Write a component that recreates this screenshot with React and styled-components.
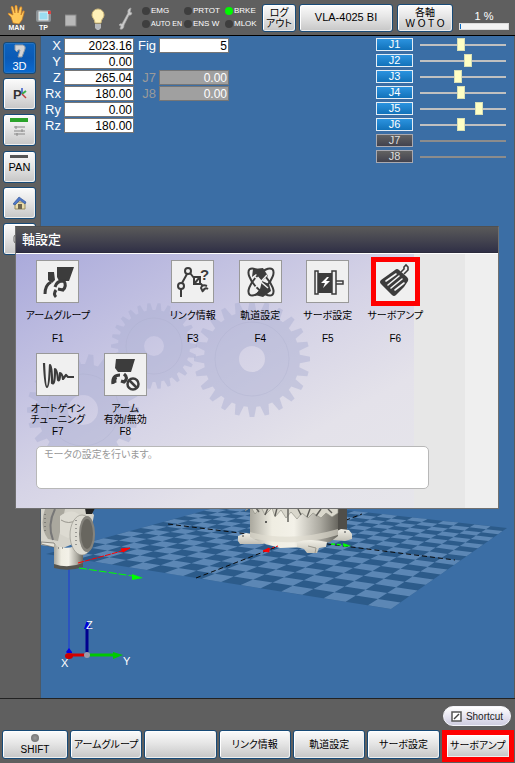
import React from "react";
import styled, { createGlobalStyle, css } from "styled-components";

const GlobalStyle = createGlobalStyle`
  *, *::before, *::after { box-sizing: border-box; }
  body {
    margin: 0;
    font-family: "Liberation Sans", "Noto Sans CJK JP", sans-serif;
    font-size: 11px;
    font-feature-settings: "palt";
    color: #111;
  }
  button, input, textarea {
    font: inherit;
    font-feature-settings: inherit;
    margin: 0;
    padding: 0;
  }
`;

const Page = styled.div`
  position: relative;
  display: flex;
  flex-direction: column;
  min-height: 100vh;
  background: #5f5f5f;
`;

/* ---------- top bar ---------- */

const TopBar = styled.header`
  display: flex;
  align-items: center;
  height: 36px;
  padding: 0 6px 0 3px;
  border-bottom: 1px solid #000;
  background: #5f5f5f;
`;

const StatusIcon = styled.div`
  display: flex;
  flex-direction: column;
  align-items: center;
  width: 27px;
  height: 28px;
  color: #fff;
  font-size: 7px;
  font-weight: bold;
  line-height: 7px;
  svg { display: block; flex: none; }
`;

const LampGrid = styled.ul`
  display: grid;
  grid-template-columns: 42px 41px 33px;
  grid-auto-rows: 13px;
  margin: 0 0 0 4px;
  padding: 0;
  list-style: none;
`;

const Lamp = styled.li`
  display: flex;
  align-items: center;
  gap: 1px;
  color: #fff;
  font-size: ${(p) => (p.$long ? "7px" : "8px")};
  line-height: 10px;
  white-space: nowrap;
  &::before {
    content: "";
    flex: none;
    width: 8px;
    height: 8px;
    border-radius: 50%;
    background: ${(p) => (p.$on ? "#00f800" : "#3e3e3e")};
  }
`;

const raised = css`
  border: 1px solid #174a77;
  border-radius: 3px;
  background: linear-gradient(#fbfbfb, #e6e6e6 45%, #c6c6c6);
  box-shadow: inset 1px 1px 0 #fff, inset -1px -1px 0 #eee;
  color: #000;
`;

const BarButton = styled.button`
  ${raised}
  flex: ${(p) => (p.$grow ? "1 1 0" : "none")};
  width: ${(p) => p.$width || "auto"};
  height: 28px;
  margin-left: ${(p) => p.$gap || "0"};
  font-size: ${(p) => (p.$grow ? "11px" : "10px")};
  line-height: 11px;
`;

const Speed = styled.label`
  display: flex;
  flex-direction: column;
  align-items: center;
  width: 50px;
  margin-left: 6px;
  padding-top: 4px;
  color: #fff;
  font-size: 11px;
  line-height: 14px;
`;

const SpeedBar = styled.progress`
  appearance: none;
  display: block;
  width: 100%;
  height: 7px;
  border: 1px solid #ddd;
  &::-webkit-progress-bar { background: #f4f4f4; }
  &::-webkit-progress-value { background: #0a6cc4; }
`;

/* ---------- work area ---------- */

const Work = styled.main`
  display: flex;
  flex: 1;
  border-right: 1px solid #5a5a5a;
`;

const Rail = styled.nav`
  display: flex;
  flex-direction: column;
  gap: 5px;
  width: 41px;
  padding: 6px 4px 0 3px;
  border-right: 1px solid #4c5966;
`;

const RailGroup = styled.div`
  display: flex;
  flex-direction: column;
  gap: 4px;
`;

const RailButton = styled.button`
  ${raised}
  display: flex;
  flex-direction: column;
  align-items: center;
  justify-content: ${(p) => (p.$top ? "flex-start" : "center")};
  gap: 2px;
  width: 33px;
  height: 32px;
  padding-top: ${(p) => (p.$top ? "3px" : "0")};
  font-size: 11px;
  line-height: 12px;
  svg { display: block; flex: none; }
  ${(p) => p.$active && css`
    background: linear-gradient(#0e63bd, #0a5ab6 50%, #0b6ad0);
    box-shadow: inset 0 0 0 1px #2474c4;
    color: #fff;
  `}
`;

const Viewport = styled.section`
  position: relative;
  display: flex;
  flex: 1;
  justify-content: space-between;
  align-items: flex-start;
  min-width: 0;
  overflow: hidden;
  background: #3b6ea5;
`;

const Scene = styled.svg`
  position: absolute;
  top: 0;
  left: 0;
  width: 100%;
  height: 100%;
`;

const PoseGrid = styled.div`
  position: relative;
  display: grid;
  grid-template-columns: 92px 94px;
  grid-auto-rows: 15px;
  gap: 1px 1px;
  margin: 2px 0 0 1px;
`;

const Pose = styled.label`
  grid-column: ${(p) => p.$col};
  grid-row: ${(p) => p.$row};
  display: flex;
  align-items: center;
  justify-content: flex-end;
  gap: 3px;
  color: ${(p) => (p.$off ? "#9a9a9a" : "#fff")};
  font-size: 13px;
  line-height: 15px;
`;

const PoseInput = styled.input`
  width: 70px;
  height: 15px;
  padding-right: 1px;
  border: 1px solid #767676;
  border-radius: 0;
  background: #fff;
  color: #000;
  font-size: 12px;
  line-height: 13px;
  text-align: right;
  &:disabled { background: #a0a0a0; color: #fff; }
`;

const JointList = styled.div`
  position: relative;
  display: flex;
  flex-direction: column;
  gap: 3px;
  margin: 2px 8px 0 0;
`;

const JointRow = styled.div`
  display: flex;
  align-items: center;
  gap: 7px;
  height: 13px;
`;

const JointButton = styled.button`
  width: 37px;
  height: 13px;
  border: 1px solid #e4eef6;
  background: linear-gradient(#2b93df, #1272ba);
  color: #fff;
  font-size: 11px;
  line-height: 11px;
  &:disabled {
    border-color: #a9a9b0;
    background: linear-gradient(#626262, #42424e);
    color: #ddd;
  }
`;

const JointSlider = styled.input`
  appearance: none;
  width: 86px;
  height: 13px;
  background: linear-gradient(#c0c0c0, #c0c0c0) center / 100% 2px no-repeat;
  &::-webkit-slider-thumb {
    appearance: none;
    width: 8px;
    height: 13px;
    border: 1px solid #d8dfb8;
    background: #ffffc4;
  }
  &:disabled {
    background: linear-gradient(#8c8c8c, #8c8c8c) center / 100% 2px no-repeat;
  }
  &:disabled::-webkit-slider-thumb { visibility: hidden; }
`;

/* ---------- dialog ---------- */

const Dialog = styled.section`
  position: absolute;
  top: 226px;
  left: 15px;
  right: 16px;
  border: 1px solid #707070;
  border-top-color: #505050;
  background: #efefef;
`;

const DialogTitle = styled.h1`
  margin: 0;
  padding: 0 6px;
  height: 26px;
  border-bottom: 1px solid #2b2b3c;
  background: linear-gradient(#595959, #454550 50%, #303046);
  color: #fff;
  font-size: 13px;
  font-weight: 500;
  line-height: 26px;
`;

const DialogBody = styled.div`
  position: relative;
  padding: 6px 69px 19px 8px;
  border-top: 1px solid #fff;
  background:
    linear-gradient(90deg, transparent 398px, #e7e7e7 398px, #e7e7e7 449px, #efefef 449px),
    linear-gradient(150deg, #aaaadb, #d5d3e6 44%, #e4e2ea 66%, #e7e7eb);
`;

const Gears = styled.svg`
  position: absolute;
  top: 0;
  left: 0;
  width: 398px;
  height: 253px;
`;

const Menu = styled.div`
  position: relative;
  display: grid;
  grid-template-columns: repeat(6, minmax(0, 1fr));
  grid-auto-rows: 93px;
`;

const MenuItem = styled.button`
  grid-column: ${(p) => p.$col};
  display: flex;
  flex-direction: column;
  align-items: center;
  border: 0;
  background: none;
  color: #000;
  font-size: 10px;
  line-height: 11px;
`;

const MenuIcon = styled.span`
  width: 43px;
  height: 43px;
  border: 1px solid #999;
  background: #f0f0f0;
  outline: ${(p) => (p.$marked ? "5px solid #f00" : "none")};
  outline-offset: -2px;
  svg { display: block; }
`;

const MenuLabel = styled.span`
  height: 30px;
  padding-top: 7px;
  white-space: pre;
`;

const Hint = styled.textarea`
  position: relative;
  display: block;
  width: calc(100% - 12px);
  height: 43px;
  margin-left: 12px;
  padding: 2px 7px;
  border: 1px solid #b8b8b8;
  border-radius: 5px;
  background: #fff;
  color: #999;
  font-size: 10px;
  line-height: 12px;
  resize: none;
`;

/* ---------- footer ---------- */

const Footer = styled.footer`
  display: flex;
  flex-direction: column;
  align-items: flex-end;
  gap: 4px;
  height: 65px;
  padding-top: 7px;
  border-top: 1px solid #222;
`;

const Shortcut = styled.button`
  display: flex;
  align-items: center;
  justify-content: center;
  gap: 4px;
  width: 68px;
  height: 20px;
  margin-right: 4px;
  border: 1px solid #f4f4fa;
  border-radius: 10px;
  background: linear-gradient(#fff, #e2e0ee 60%, #cfcde0);
  color: #222;
  font-size: 10px;
`;

const KeyRow = styled.div`
  display: grid;
  grid-template-columns: 66px repeat(6, minmax(0, 1fr));
  gap: 2px;
  align-items: start;
  align-self: stretch;
  padding: 0 1px 0 2px;
`;

const KeyButton = styled.button`
  ${raised}
  display: flex;
  flex-direction: column;
  align-items: center;
  justify-content: center;
  gap: 2px;
  height: 29px;
  font-size: 10px;
  line-height: 12px;
  white-space: nowrap;
  ${(p) => p.$marked && css`
    height: 32px;
    border: 5px solid #f00;
    border-radius: 0;
  `}
`;

const ShiftLamp = styled.span`
  width: 8px;
  height: 8px;
  border-radius: 50%;
  background: radial-gradient(#999, #6a6a6a);
`;

/* ---------- scene geometry ---------- */

const CORNERS = [[46, 554], [247, 499], [507, 528], [391, 609]];
const CELLS = 18;

function makeProjection([[x0, y0], [x1, y1], [x2, y2], [x3, y3]]) {
  const dx1 = x1 - x2, dx2 = x3 - x2, sx = x0 - x1 + x2 - x3;
  const dy1 = y1 - y2, dy2 = y3 - y2, sy = y0 - y1 + y2 - y3;
  const det = dx1 * dy2 - dx2 * dy1;
  const g = (sx * dy2 - dx2 * sy) / det;
  const h = (dx1 * sy - sx * dy1) / det;
  return (u, v) => {
    const w = g * u + h * v + 1;
    return [
      ((x1 - x0 + g * x1) * u + (x3 - x0 + h * x3) * v + x0) / w,
      ((y1 - y0 + g * y1) * u + (y3 - y0 + h * y3) * v + y0) / w,
    ];
  };
}

const project = makeProjection(CORNERS);

function checkerPath() {
  let d = "";
  for (let i = 0; i < CELLS; i += 1) {
    for (let j = 0; j < CELLS; j += 1) {
      if ((i + j) % 2 === 1) {
        const pts = [[i, j], [i + 1, j], [i + 1, j + 1], [i, j + 1]].map(([a, b]) =>
          project(a / CELLS, b / CELLS).map((n) => n.toFixed(1)).join(" ")
        );
        d += `M${pts.join("L")}Z`;
      }
    }
  }
  return d;
}

const lightCells = checkerPath();

function RobotScene() {
  return (
    <Scene viewBox="41 36 473 662" preserveAspectRatio="xMinYMin slice" aria-hidden="true">
      <defs>
        <linearGradient id="shell">
          <stop offset="0" stopColor="#aaa89e" />
          <stop offset="0.25" stopColor="#efede2" />
          <stop offset="0.5" stopColor="#f3f1e8" />
          <stop offset="0.8" stopColor="#aaa89f" />
          <stop offset="1" stopColor="#68665f" />
        </linearGradient>
        <linearGradient id="foot" x2="0" y2="1">
          <stop offset="0" stopColor="#f2f0e7" />
          <stop offset="1" stopColor="#c0beb4" />
        </linearGradient>
      </defs>
      <polygon points={CORNERS.join(" ")} fill="#2c5b8a" />
      <path d={lightCells} fill="#5c87b5" />
      <g stroke="#0a0a0a" strokeWidth="1" strokeDasharray="5 3">
        <path d="M168 524L455 560M196 578L362 514" />
      </g>

      <g>
        <path d="M336 505h11v25l-9 5z" fill="#504e49" />
        <path d="M238 536l8-3 11 2 7 9h-24l-2-3z" fill="url(#foot)" />
        <path d="M333 533l8-4 8 1 3 4v5l-7 2-12-1z" fill="url(#foot)" />
        <path d="M250 505h88v31l-8 6-18 5-32 1-18-5-12-6z" fill="url(#shell)" />
        <path d="M250 532q40 11 88-3v6q-42 13-88 3z" fill="#dedccf" opacity=".65" />
        <path d="M250 505h88v8l-6 4-6-4-5 5-8-5-5 5-6-5-5 6-6-7-5 6-5-8-6 7-3-9-7 7-4-8-6 7-4-7-6 4z" fill="#d9d7cc" stroke="#8a8980" strokeWidth=".6" />
        <path d="M256 508l3 4m9-4l-3 7m12-7l-2 8m13-8v14m10-13l3 6m9-6l-3 8m14-8l-5 7m12-7l4 4" stroke="#5d5c57" strokeWidth="1.4" />
        <path d="M297 542q12-4 30 0l-1 5-7 1-2 5h-10l-3-4-7-2z" fill="url(#foot)" />
        <path d="M308 546l8 2-1 5" fill="none" stroke="#99978d" />
        <circle cx="266" cy="522" r="1" fill="#333" />
        <circle cx="243" cy="536" r="1" fill="#777" />
        <circle cx="345" cy="532" r="1" fill="#777" />
      </g>
      <path d="M278 546l-9 3" stroke="#f00" strokeDasharray="2 2" />
      <path d="M263 551l6-3v4z" fill="#f00" stroke="#f00" />
      <path d="M331 544l14 1" stroke="#0f0" strokeWidth="1.4" strokeDasharray="4 2" />
      <path d="M343 543l8 3-7 1z" fill="#0f0" />

      <path d="M69 569v82" stroke="#1d38d8" />
      <g>
        <path d="M41 509h48l5 6-4 22-27 11-22-3z" fill="#d5d3ca" />
        <path d="M45 509q-6 18 3 30l10 2 7-32z" fill="#aaa89e" />
        <path d="M55 509q-8 16-2 31" fill="none" stroke="#777" strokeWidth="2" />
        <path d="M60 516q8-6 15-4l8 5-3 17-12 4-8-4z" fill="#dddbd2" />
        <path d="M61 520q8 5 15 0" fill="none" stroke="#99978f" />
        <path d="M85 508h10l-3 6h-6z" fill="#222" />
        <path d="M41 542l13 1 3 5-16-4z" fill="#e5e3da" stroke="#55534d" strokeWidth=".6" />
        <path d="M54 544q12 8 29-1v23q-14 6-29 0z" fill="url(#shell)" />
        <path d="M54 564q14 5 29-1v4q-14 5-29 1z" fill="#565550" />
        <ellipse cx="82" cy="535" rx="12" ry="20" fill="#dddbd2" stroke="#8c8a82" strokeWidth=".6" />
        <ellipse cx="87" cy="534" rx="8" ry="18" fill="#85837c" />
        <ellipse cx="87" cy="534" rx="6" ry="15" fill="#68665f" />
        <path d="M45 514v20M76 520v26M58 548h5" stroke="#555" strokeDasharray="1 3" />
      </g>
      <path d="M78 563l44-12" stroke="#f00" strokeDasharray="6 1" />
      <path d="M121 549l9-1-7 4z" fill="#f00" stroke="#f00" />
      <path d="M79 568l54 8" stroke="#0f0" strokeDasharray="8 2" />
      <path d="M132 574l11 4-11 2z" fill="#0f0" />

      <path d="M87 655v-29" stroke="#00008f" strokeWidth="3" />
      <path d="M84 629l3-9 4 9z" fill="#0000d8" />
      <path d="M87 655h27" stroke="#00c800" strokeWidth="3" />
      <path d="M113 652l10 3-10 4z" fill="#00c800" />
      <path d="M87 655H71" stroke="#d40000" strokeWidth="3" />
      <ellipse cx="69" cy="656" rx="4" ry="3" fill="#c00" />
      <path d="M66 652l3-4 3 4v1h-5z" fill="#0000e8" />
      <circle cx="87" cy="655" r="3" fill="#9a9aac" />
      <g fill="#fff" fontSize="11">
        <text x="86" y="629">Z</text>
        <text x="61" y="667">X</text>
        <text x="123" y="665">Y</text>
      </g>
    </Scene>
  );
}

function gearPath(cx, cy, outer, inner, hole, teeth) {
  const pts = [];
  const step = (Math.PI * 2) / teeth;
  for (let k = 0; k < teeth; k += 1) {
    [[-0.34, inner], [-0.15, outer], [0.15, outer], [0.34, inner]].forEach(([o, r]) => {
      const a = (k + o) * step;
      pts.push(`${(cx + r * Math.cos(a)).toFixed(1)} ${(cy + r * Math.sin(a)).toFixed(1)}`);
    });
  }
  return `M${pts.join("L")}ZM${cx - hole} ${cy}a${hole} ${hole} 0 1 0 ${hole * 2} 0a${hole} ${hole} 0 1 0 ${-hole * 2} 0Z`;
}

function GearBackdrop() {
  return (
    <Gears viewBox="16 254 398 253" aria-hidden="true">
      <g fill="#a9aed0" fillOpacity=".45" fillRule="evenodd">
        <path d={gearPath(154, 346, 43, 36, 10, 26)} />
        <path d={gearPath(83, 410, 56, 46, 15, 22)} />
        <path d={gearPath(252, 359, 58, 48, 13, 24)} />
      </g>
      <g fill="none" stroke="#a8abcb" strokeOpacity=".3">
        <circle cx="154" cy="346" r="28" />
        <circle cx="83" cy="410" r="36" />
        <circle cx="252" cy="359" r="37" />
      </g>
    </Gears>
  );
}

/* ---------- menu drawings ---------- */

const INK = "#3c3c3c";

const drawings = {
  group: (
    <>
      <path d="M20 6h17l-5 14H22l-2-4zM11 11h6l1 8-3 3-4-3z" fill={INK} />
      <path d="M28 20q-8-1-10 6M27 20q3 5-1 9l-5-1M19 29q-3 4 0 7M14 21q-6 3-6 12" fill="none" stroke={INK} strokeWidth="3" />
    </>
  ),
  link: (
    <>
      <g fill="none" stroke={INK} strokeWidth="2">
        <circle cx="16" cy="10" r="3" /><circle cx="9" cy="25" r="3" />
        <path d="M15 13l-5 9M9 28v8M18 12l4 5M22 16h6v7h-6zM22 23l6-7M28 22l3 3M35 25q-5-2-6 2 2 4 2 4M36 28q-3-2-5 2" />
      </g>
      <text x="28" y="19" fontSize="15" fontWeight="bold" fill={INK}>?</text>
    </>
  ),
  orbit: (
    <>
      <path d="M13 8l10-1 5 8-6 5-6-7-4 3zM22 20l7 3 2 7-8 6-8-2 5-6z" fill={INK} />
      <g fill="none" stroke={INK} strokeWidth="2">
        <ellipse cx="21" cy="21" rx="17" ry="7" transform="rotate(48 21 21)" />
        <ellipse cx="21" cy="21" rx="17" ry="7" transform="rotate(-48 21 21)" />
      </g>
      <path d="M14 15l14 12M27 14L14 28" stroke="#eee" strokeWidth="1.5" />
    </>
  ),
  motor: (
    <>
      <path d="M11 12h15v20H11z" fill={INK} />
      <g fill="#f0f0f0" stroke={INK} strokeWidth="1.5">
        <path d="M8 10h3v23H8zM25 10h4v23h-4zM29 20h7v3h-7z" />
      </g>
      <path d="M20 16l-6 6h4l-2 5 7-7h-4l3-4z" fill="#fff" />
    </>
  ),
  amp: (
    <>
      <path d="M20 9q2-2 4 0l8 7q2 2 1 4l-4 6-8 8q-2 2-4 0L6 23q-2-2 0-4z" fill={INK} />
      <path d="M26 11l3-3V6l2-2 2 2v3l-4 4" fill="none" stroke={INK} strokeWidth="1.6" />
      <path d="M11 20l10-7M13 24l11-9M16 27l11-9M20 29l9-7" stroke="#f4f4f4" strokeWidth="1.6" strokeLinecap="round" />
    </>
  ),
  gain: (
    <path d="M7 9q1 24 3 24t3-22q2 0 2 18 3 3 3-14 2 0 3 11 2 2 2-7 2 0 3 6l3-4 2 2h6" fill="none" stroke={INK} strokeWidth="2.2" strokeLinejoin="round" />
  ),
  toggle: (
    <>
      <path d="M11 5h19l-4 13H13l-3-4z" fill={INK} />
      <path d="M8 30q-1-9 7-9M19 20q5 4 0 8l-3-1M11 23q-2 2-1 6" fill="none" stroke={INK} strokeWidth="3.2" />
      <circle cx="28" cy="30" r="5.5" fill="#f0f0f0" stroke={INK} strokeWidth="2.5" />
      <path d="M24 26l8 8" stroke={INK} strokeWidth="2.5" />
    </>
  ),
};

const menuItems = [
  { col: 1, icon: "group", label: "アームグループ", keyName: "F1" },
  { col: 3, icon: "link", label: "リンク情報", keyName: "F3" },
  { col: 4, icon: "orbit", label: "軌道設定", keyName: "F4" },
  { col: 5, icon: "motor", label: "サーボ設定", keyName: "F5" },
  { col: 6, icon: "amp", label: "サーボアンプ", keyName: "F6", marked: true },
  { col: 1, icon: "gain", label: "オートゲイン\nチューニング", keyName: "F7" },
  { col: 2, icon: "toggle", label: "アーム\n有効/無効", keyName: "F8" },
];

const poses = [
  ["X", "2023.16", 1, 1], ["Fig", "5", 2, 1],
  ["Y", "0.00", 1, 2],
  ["Z", "265.04", 1, 3], ["J7", "0.00", 2, 3, true],
  ["Rx", "180.00", 1, 4], ["J8", "0.00", 2, 4, true],
  ["Ry", "0.00", 1, 5],
  ["Rz", "180.00", 1, 6],
];

const joints = [
  ["J1", 48], ["J2", 57], ["J3", 44], ["J4", 48], ["J5", 70], ["J6", 48],
  ["J7", null], ["J8", null],
];

const lamps = [["EMG"], ["PRTOT"], ["BRKE", true], ["AUTO EN"], ["ENS W"], ["MLOK"]];

const keys = ["アームグループ", "", "リンク情報", "軌道設定", "サーボ設定"];

export default function App() {
  return (
    <Page>
      <GlobalStyle />
      <TopBar>
        <StatusIcon>
          <svg width="20" height="20" viewBox="0 0 20 20">
            <path d="M6 19l-2-6-3-3q0-2 3 0l2 1-2-8q1-2 2 0l2 6V2q1-2 2 0l1 7 2-6q2-1 2 1l-1 7 2-4q2-1 1 2l-2 7-3 4z" fill="#ffc858" stroke="#c87a22" strokeWidth=".7" />
          </svg>
          MAN
        </StatusIcon>
        <StatusIcon>
          <svg width="18" height="20" viewBox="0 0 18 20">
            <rect x="1" y="6" width="15" height="12" rx="2" fill="#8c9296" />
            <rect x="4" y="8" width="9" height="8" fill="#9adcf0" stroke="#eee" />
            <path d="M13 7h3v3h-3z" fill="#df4444" />
          </svg>
          TP
        </StatusIcon>
        <StatusIcon>
          <svg width="12" height="24" viewBox="0 0 12 24"><rect y="11" width="11" height="11" fill="#b8b8b8" stroke="#888" /></svg>
        </StatusIcon>
        <StatusIcon>
          <svg width="14" height="28" viewBox="0 0 14 28">
            <path d="M4 19C4 15 1 14 1 11a6 6 0 0 1 12 0c0 3-3 4-3 8z" fill="#fff1b8" stroke="#d2bc7d" />
            <path d="M4 20h6v4l-2 2H6l-2-2z" fill="#b5b8bc" />
          </svg>
        </StatusIcon>
        <StatusIcon>
          <svg width="16" height="28" viewBox="0 0 16 28">
            <path d="M5 20l6-11q-1-4 3-5l-1 4 2 1q-1 3-3 2L7 21q0 5-4 4l1-3-2-1q1-2 3-1z" fill="#ccc" stroke="#a8a8a8" strokeWidth=".7" />
          </svg>
        </StatusIcon>
        <LampGrid>
          {lamps.map(([name, on]) => (
            <Lamp key={name} $on={on} $long={name.length > 5}>{name}</Lamp>
          ))}
        </LampGrid>
        <BarButton $width="34px" $gap="4px">ログ<br />アウト</BarButton>
        <BarButton $grow $gap="3px">VLA-4025 BI</BarButton>
        <BarButton $width="56px" $gap="4px">各軸<br />W O T O</BarButton>
        <Speed>
          1 %
          <SpeedBar value={2} max={100} />
        </Speed>
      </TopBar>

      <Work>
        <Rail>
          <RailGroup>
            <RailButton $active>
              <svg width="14" height="14" viewBox="0 0 14 14">
                <path d="M2 1h8q3 1 2 4l-3 8H5l2-7H5L4 8 2 6z" fill="#d4d4d4" stroke="#8d98a5" />
              </svg>
              3D
            </RailButton>
            <RailButton aria-label="P">
              <svg width="20" height="18" viewBox="0 0 20 18">
                <text x="3" y="14" fontSize="13" fontWeight="bold" fill="#333">P</text>
                <path d="M12 9V3" stroke="#3558c8" strokeWidth="1.5" />
                <path d="M12 9l4-3" stroke="#35b04a" strokeWidth="2" />
                <path d="M12 9l4 4" stroke="#c04040" strokeWidth="1.5" />
              </svg>
            </RailButton>
            <RailButton $top aria-label="Settings">
              <svg width="19" height="19" viewBox="0 0 19 19">
                <path d="M0 0h18v4H0z" fill="#2ba32b" />
                <path d="M4 9h11M4 13h11M4 16h11M6 8v3M12 11v3M7 15v3" stroke="#888" />
              </svg>
            </RailButton>
          </RailGroup>
          <RailGroup>
            <RailButton $top>
              <svg width="19" height="4" viewBox="0 0 19 4"><path d="M0 0h18v3H0z" fill="#555" /></svg>
              PAN
            </RailButton>
            <RailButton aria-label="Home">
              <svg width="14" height="14" viewBox="0 0 14 14">
                <path d="M2 6h10v7H2z" fill="#eadca8" stroke="#998c60" />
                <path d="M0 8l6-7 7 5-1 2-5-4-5 5z" fill="#4f78c8" stroke="#2d4f91" strokeWidth=".6" />
                <path d="M5 8h4v5H5z" fill="#6c6450" />
              </svg>
            </RailButton>
            <RailButton aria-label="Window">
              <svg width="14" height="12" viewBox="0 0 14 12"><rect x="1" y="2" width="12" height="8" rx="2" fill="none" stroke="#666" /></svg>
            </RailButton>
          </RailGroup>
        </Rail>

        <Viewport>
          <RobotScene />
          <PoseGrid>
            {poses.map(([name, value, col, row, off]) => (
              <Pose key={name} $col={col} $row={row} $off={off}>
                {name}
                <PoseInput defaultValue={value} disabled={off} />
              </Pose>
            ))}
          </PoseGrid>
          <JointList>
            {joints.map(([name, value]) => (
              <JointRow key={name}>
                <JointButton disabled={value === null}>{name}</JointButton>
                <JointSlider type="range" aria-label={name} defaultValue={value ?? 0} disabled={value === null} />
              </JointRow>
            ))}
          </JointList>
        </Viewport>
      </Work>

      <Footer>
        <Shortcut>
          <svg width="11" height="11" viewBox="0 0 11 11">
            <rect x="1" y="1" width="9" height="9" fill="#fff" stroke="#555" strokeWidth="1.5" />
            <path d="M3 8l5-5" stroke="#444" strokeWidth="1.5" />
          </svg>
          Shortcut
        </Shortcut>
        <KeyRow>
          <KeyButton><ShiftLamp />SHIFT</KeyButton>
          {keys.map((name, i) => <KeyButton key={i}>{name}</KeyButton>)}
          <KeyButton $marked>サーボアンプ</KeyButton>
        </KeyRow>
      </Footer>

      <Dialog role="dialog" aria-labelledby="dialog-title">
        <DialogTitle id="dialog-title">軸設定</DialogTitle>
        <DialogBody>
          <GearBackdrop />
          <Menu>
            {menuItems.map((item) => (
              <MenuItem key={item.keyName} $col={item.col}>
                <MenuIcon $marked={item.marked}>
                  <svg width="41" height="41" viewBox="0 0 41 41" aria-hidden="true">{drawings[item.icon]}</svg>
                </MenuIcon>
                <MenuLabel>{item.label}</MenuLabel>
                {item.keyName}
              </MenuItem>
            ))}
          </Menu>
          <Hint readOnly aria-label="説明" defaultValue="モータの設定を行います。" />
        </DialogBody>
      </Dialog>
    </Page>
  );
}
